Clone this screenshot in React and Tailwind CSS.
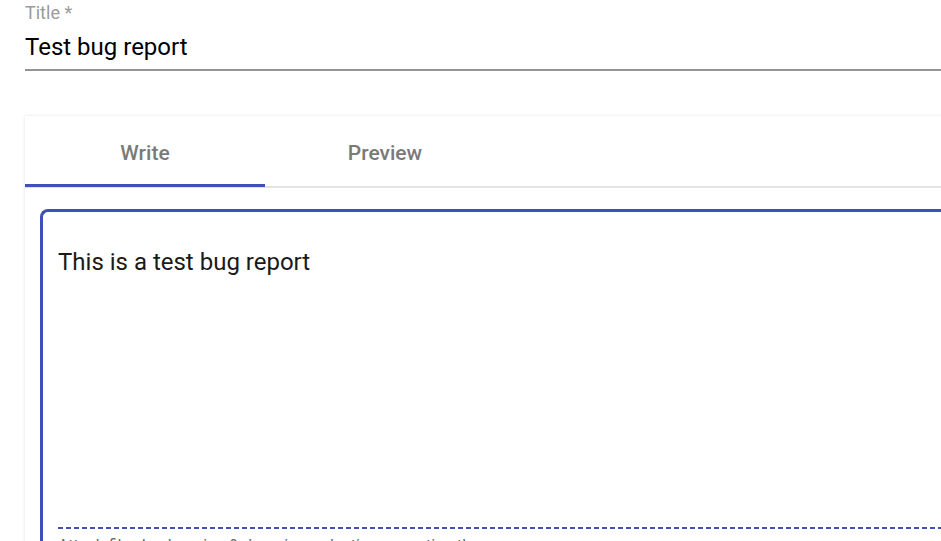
export default function App() {
  return (
    <div className="w-[941px] h-[541px] overflow-hidden bg-white font-['Roboto',sans-serif]">
      <div className="w-[1000px] pl-[25px]">
        {/* Title field */}
        <div className="pt-[2px]">
          <label className="block text-[18px] leading-[22px] text-[#9b9b9b]">Title *</label>
          <div className="mt-[9px] pb-[8px] border-b-2 border-[#949494] text-[24px] leading-[28px] text-black">
            Test bug report
          </div>
        </div>

        {/* Editor card */}
        <div className="mt-[45px] bg-white shadow-[0_0_3px_rgba(0,0,0,0.12)]">
          <div className="flex h-[72px] border-b-2 border-[#e3e3e3]">
            <div className="relative w-[240px] flex items-center justify-center pt-[5px] text-[21px] font-medium text-[#7a7a7a]">
              Write
              <div className="absolute left-0 right-0 bottom-[-1px] h-[3px] bg-[#3f51b5]" />
            </div>
            <div className="w-[240px] flex items-center justify-center pt-[5px] text-[21px] font-medium text-[#7a7a7a]">
              Preview
            </div>
          </div>

          <div className="pl-[15px] pt-[21px]">
            <div className="h-[400px] border-l-[3px] border-t-[3px] border-[#3f51b5] rounded-tl-[8px] pl-[15px] pt-[36px]">
              <div className="h-[279px] text-[24px] leading-[28px] text-[#1a1a1a]">This is a test bug report</div>
              <div className="h-[2px] bg-[repeating-linear-gradient(90deg,#3f51b5_0_5px,transparent_5px_8px)]" />
              <div className="pt-[6px] text-[16px] leading-[22px] text-[#6a6a6a]">
                Attach files by dragging &amp; dropping, selecting or pasting them.
              </div>
            </div>
          </div>
        </div>
      </div>
    </div>
  );
}
